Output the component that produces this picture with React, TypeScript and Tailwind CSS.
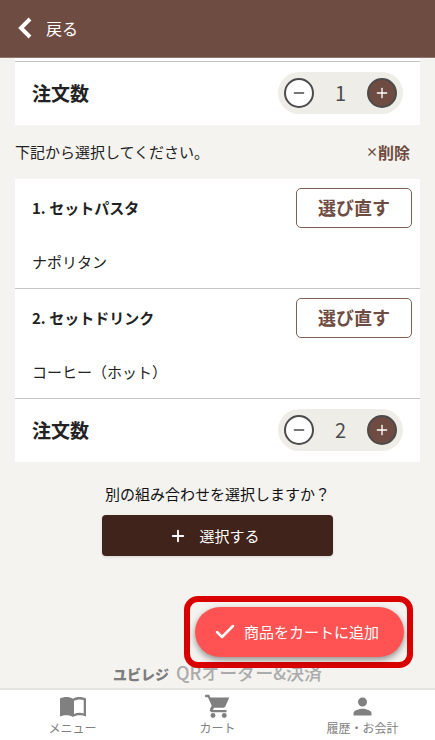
import { MdPerson } from 'react-icons/md';
import { Check, Minus, Plus } from 'lucide-react';

const setItems = [
  { id: 1, title: 'セットパスタ', choice: 'ナポリタン' },
  { id: 2, title: 'セットドリンク', choice: 'コーヒー（ホット）' },
];

const QuantityRow = ({ id, value }: { id: string; value: number }) => {
  return (
    <div className="flex items-center justify-between px-[17px] pt-[10px] pb-[11px]">
      <span id={id} className="text-[19px] font-bold leading-6">注文数</span>
      <div
        role="group"
        aria-labelledby={id}
        className="flex h-[42px] w-[125px] items-center justify-between rounded-full bg-[#eeede8] px-[6px] text-[#4b4b4b]"
      >
        <button
          type="button"
          aria-label="減らす"
          className="flex size-[30px] items-center justify-center rounded-full border-2 border-[#4b4b4b] bg-white"
        >
          <Minus className="size-4" strokeWidth={2} />
        </button>
        <output className="text-xl leading-6">{value}</output>
        <button
          type="button"
          aria-label="増やす"
          className="flex size-[30px] items-center justify-center rounded-full border-2 border-[#4b4b4b] bg-[#6f4c41] text-white"
        >
          <Plus className="size-4" strokeWidth={2} />
        </button>
      </div>
    </div>
  );
};

const BookIcon = () => (
  <svg viewBox="0 0 26 20" className="h-5 w-[26px]" aria-hidden="true">
    <path
      fill="currentColor"
      fillRule="evenodd"
      d="M0 1.5C2 .5 4 0 6.5 0 9 0 11.3.6 13 1.8 14.7.6 17 0 19.5 0 22 0 24 .5 26 1.5V19.5C24 18.5 22 18.2 19.5 18.2 17 18.2 14.7 18.8 13 20 11.3 18.8 9 18.2 6.5 18.2 4 18.2 2 18.5 0 19.5ZM14 3.8V17C15.7 16.2 17.5 15.8 19.5 15.8 21 15.8 22.4 16 23.7 16.4V3C22.4 2.6 21 2.4 19.5 2.4 17.5 2.4 15.7 3 14 3.8Z"
    />
  </svg>
);

const CartIcon = () => (
  <svg viewBox="0 0 24 24" className="size-[27px]" fill="currentColor" aria-hidden="true">
    <circle cx="8" cy="20" r="2.2" />
    <circle cx="18" cy="20" r="2.2" />
    <path d="M1 1.500v2.200h2.500l3.400 7.600-1.500 2.700C4.600 15.500 5.600 17 7 17h13v-2H8l.800-1.800h8.300c.700 0 1.300-.400 1.700-1L22.500 4H5.700L4.600 1.500z" />
  </svg>
);

const App = () => {
  return (
    <div className="flex min-h-screen flex-col bg-[#f4f3ef] font-['Noto_Sans_CJK_JP',sans-serif] text-[15px] leading-6 text-[#222]">
      <header className="flex h-[58px] items-center border-b border-[#8f756c] bg-[#6f4c41] px-[18px] pb-[2px] text-white">
        <a href="#back" className="flex items-center gap-[14px] text-base">
          <svg viewBox="0 0 14 22" className="h-[22px] w-[14px]" aria-hidden="true">
            <path d="M12 2 3 11l9 9" fill="none" stroke="currentColor" strokeWidth="4" />
          </svg>
          戻る
        </a>
      </header>

      <main className="relative flex flex-1 flex-col px-[15px]">
        <section className="bg-white pt-[3px]">
          <div className="border-t border-[#c4c4c4]">
            <QuantityRow id="quantity-1" value={1} />
          </div>
        </section>

        <div className="flex items-center justify-between py-[15px] pr-[10px]">
          <p>下記から選択してください。</p>
          <button type="button" className="flex items-center text-base font-bold leading-6 text-[#6f4c41]">
            <span className="text-xs">×</span>
            削除
          </button>
        </div>

        <section className="bg-white">
          {setItems.map((item) => (
            <div key={item.id} className="border-b border-[#c4c4c4] pt-[9px] pr-2 pb-[14px] pl-[17px]">
              <div className="flex items-center justify-between">
                <h2 className="font-bold">{item.id}. {item.title}</h2>
                <button
                  type="button"
                  className="h-10 w-[116px] rounded-[5px] border border-[#805f55] pb-[2px] text-lg font-bold text-[#6f4c41]"
                >
                  選び直す
                </button>
              </div>
              <p className="mt-[22px]">{item.choice}</p>
            </div>
          ))}
          <QuantityRow id="quantity-2" value={2} />
        </section>

        <section className="mt-5 flex flex-col items-center">
          <p className="text-[#111]">別の組み合わせを選択しますか？</p>
          <button
            type="button"
            className="mt-[9px] flex h-[41px] w-4/7 items-center justify-center gap-3 rounded-[4px] bg-[#40231a] pr-[6px] text-white shadow-sm"
          >
            <Plus className="size-[18px]" strokeWidth={2.5} />
            選択する
          </button>
        </section>

        <footer className="mt-auto flex items-baseline justify-center gap-[7px] pt-20 pb-px text-lg leading-[30px] text-[#ababab]">
          <span className="text-sm font-black text-[#7d7d7d]">ユビレジ</span>
          <span className="font-medium">QRオーダー&amp;決済</span>
        </footer>

        {/* Floating cart button */}
        <div className="absolute right-[22px] bottom-5 rounded-[14px] border-6 border-[#d90000] bg-[#f4f3ef] py-[5px] pr-[3px] pl-[5px]">
          <button
            type="button"
            className="flex h-[50px] items-center gap-[7px] rounded-full bg-[#ff5353] pr-[25px] pl-[18px] text-white shadow-[0_3px_6px_rgba(0,0,0,0.4)]"
          >
            <Check className="size-6" strokeWidth={2.5} />
            商品をカートに追加
          </button>
        </div>
      </main>

      <nav className="grid h-[52px] grid-cols-3 border-t-2 border-[#e5e4e1] bg-white text-xs leading-4 text-[#808080]">
        <a href="#menu" className="flex flex-col items-center pt-[7px]">
          <BookIcon />
          <span className="mt-[3px]">メニュー</span>
        </a>
        <a href="#cart" className="flex flex-col items-center pt-[3px]">
          <CartIcon />
          <span>カート</span>
        </a>
        <a href="#account" className="flex flex-col items-center pt-[3px]">
          <MdPerson className="size-[27px]" />
          <span>履歴・お会計</span>
        </a>
      </nav>
    </div>
  );
};

export default App;
